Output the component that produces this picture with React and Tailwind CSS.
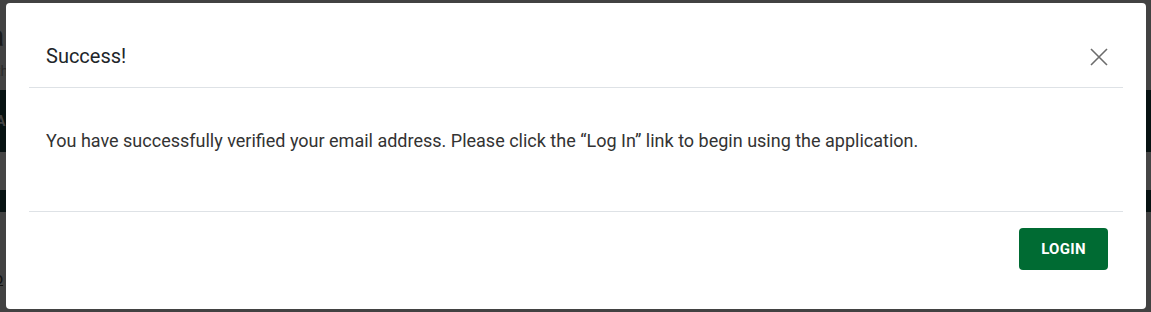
import React from "react";

export default function App() {
  return (
    <div className="relative w-[1151px] h-[312px] overflow-hidden bg-[#424242]" style={{ fontFamily: "Roboto, 'Liberation Sans', sans-serif" }}>
      {/* background page (under overlay) */}
      <div className="flex flex-col h-full">
        <div className="h-[26px]" />
        <div className="h-[20px] text-[30px] leading-[20px] text-[#1a1a1a] -ml-[12px]">a</div>
        <div className="h-[18px] mt-[16px] text-[14px] leading-[18px] text-[#2a2a2a] -ml-[4px]">th</div>
        <div className="h-[10px]" />
        <div className="h-[62px] bg-[#071212] flex items-center text-[14px] font-bold text-[#444] -ml-[4px]">A</div>
        <div className="h-[38px] bg-[#454545]" />
        <div className="h-[22px] bg-[#071212]" />
        <div className="h-[58px]" />
        <div className="text-[16px] leading-[18px] underline text-[#111] -ml-[6px]">o</div>
      </div>

      {/* modal */}
      <div className="absolute left-[6px] top-[3px] w-[1140px] h-[306px] bg-white rounded-[4px] px-[23px] flex flex-col">
        <div className="h-[85px] border-b border-[#dee2e6] flex items-start justify-between pl-[17px] pr-[15px] pt-[41px]">
          <div className="text-[20px] leading-[24px] text-[#212529]">Success!</div>
          <svg width="18" height="18" viewBox="0 0 18 18" className="text-[#6c6c6c] mt-[4px]">
            <path d="M1 1 L17 17 M17 1 L1 17" stroke="currentColor" strokeWidth="1.6" fill="none" />
          </svg>
        </div>
        <div className="h-[124px] border-b border-[#dee2e6] flex items-start pl-[17px] pt-[41px]">
          <p className="text-[18px] leading-[24px] text-[#333]">
            You have successfully verified your email address. Please click the “Log In” link to begin using the application.
          </p>
        </div>
        <div className="flex justify-end pt-[16px] pr-[15px]">
          <button className="w-[89px] h-[42px] rounded-[4px] bg-[#006b33] text-white text-[15px] font-bold tracking-[0.3px]">
            LOGIN
          </button>
        </div>
      </div>
    </div>
  );
}
